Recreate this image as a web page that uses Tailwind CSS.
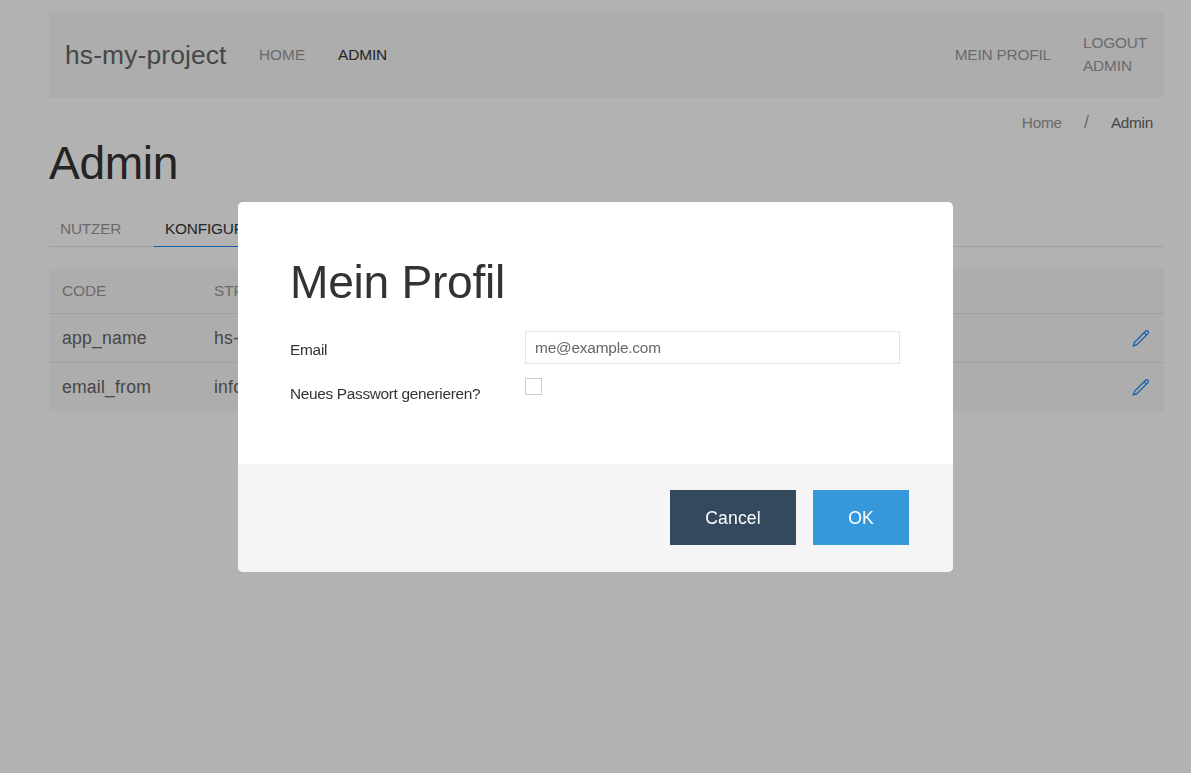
<!DOCTYPE html>
<html lang="de">
<head>
<meta charset="utf-8">
<title>hs-my-project</title>
<script src="https://cdn.jsdelivr.net/npm/@tailwindcss/browser@4"></script>
</head>
<body class="h-[773px] overflow-hidden bg-white font-['Liberation_Sans',Arial,sans-serif] text-[17.6px] leading-[1.5] text-[#666]">
<svg class="hidden"><symbol id="pencil" viewBox="0 0 20 20"><path fill="none" stroke="currentColor" stroke-width="1.15" d="M17.25,6.01 L7.12,16.1 L3.82,17.2 L5.02,13.9 L15.12,3.88 C15.71,3.29 16.66,3.29 17.25,3.88 C17.83,4.47 17.83,5.42 17.25,6.01 L17.25,6.01 Z"/><path fill="none" stroke="currentColor" stroke-width="1.15" d="M15.98,7.268 L13.851,5.148"/></symbol></svg>
<div class="ml-[49px] w-[1115px] pt-[11px]">
  <nav class="flex h-[87px] items-center justify-between bg-[#f8f8f8] px-4 text-[15.4px] leading-[23px] text-[#999]">
    <div class="flex items-center">
      <a class="mr-[33px] w-[161px] pt-[2px] text-[26.4px] leading-none tracking-[0.13px] whitespace-nowrap text-[#666]">hs-my-project</a>
      <a class="mr-[33px] w-[46px]">HOME</a>
      <a class="tracking-[-0.1px] text-[#333]">ADMIN</a>
    </div>
    <div class="flex items-center gap-8">
      <a class="tracking-[-0.19px] whitespace-nowrap">MEIN PROFIL</a>
      <a class="w-[65px] pb-[2px] tracking-[-0.15px]">LOGOUT ADMIN</a>
    </div>
  </nav>
  <div class="flex h-[50px] items-center justify-end pr-[11px] text-[15.4px] text-[#999]">
    <a class="tracking-[-0.2px]">Home</a><span class="mx-[22px] pb-px text-[17.6px]">/</span><span class="tracking-[-0.3px] text-[#666]">Admin</span>
  </div>
  <h1 class="-mt-[12px] h-[55px] text-[46.2px] leading-[55px] tracking-[-0.4px] text-[#333]">Admin</h1>
  <div class="mt-[21px] flex h-[35px] border-b border-[#e5e5e5] text-[15.4px] leading-[23px] tracking-[-0.2px] text-[#999]">
    <a class="mr-[22px] h-[35px] w-[83px] px-[11px] pt-[5px]">NUTZER</a>
    <a class="h-[35px] border-b border-[#1e87f0] px-[11px] pt-[5px] text-[#333]">KONFIGURATION</a>
  </div>
  <div class="mt-[22px] bg-[#f8f8f8]">
    <div class="flex h-[44px] items-center px-[13px] text-[15.4px] tracking-[-0.1px] text-[#999]"><span class="w-[152px]">CODE</span><span>STRING</span></div>
    <div class="flex h-[49px] items-center border-t border-[#e5e5e5] px-[13px] tracking-[0.2px]"><span class="w-[152px]">app_name</span><span>hs-my-project</span><svg class="ml-auto size-[22px] text-[#1e87f0]"><use href="#pencil"/></svg></div>
    <div class="flex h-[49px] items-center border-t border-[#e5e5e5] px-[13px] tracking-[0.2px]"><span class="w-[152px]">email_from</span><span>info@example.com</span><svg class="ml-auto size-[22px] text-[#1e87f0]"><use href="#pencil"/></svg></div>
  </div>
</div>
<div class="fixed inset-0 flex items-start justify-center bg-black/30 pt-[202px]">
  <div class="h-[370px] w-[715px] overflow-hidden rounded-[5px] bg-white">
    <div class="h-[262px] px-[52px] pt-[53px] pr-[53px]">
      <h2 class="h-[55px] text-[46.2px] leading-[55px] tracking-[-0.3px] text-[#333]">Mein Profil</h2>
      <div class="mt-[21px] flex h-[47px] text-[15.4px] text-[#333]">
        <label class="h-[33px] w-[235px] pt-[7px] tracking-[-0.25px]">Email</label>
        <div class="flex h-[33px] flex-1 items-center border border-[#e5e5e5] px-[9px] tracking-[-0.19px] text-[#666]">me@example.com</div>
      </div>
      <div class="flex text-[15.4px] text-[#333]">
        <label class="w-[235px] pt-[4px] tracking-[-0.32px]">Neues Passwort generieren?</label>
        <div class="size-[17px] border border-[#ccc]"></div>
      </div>
    </div>
    <div class="flex h-[108px] justify-end gap-[17px] bg-[#f5f5f5] pt-[26px] pr-[44px] text-white">
      <button class="h-[55px] w-[126px] bg-[#34495e] pt-[2px] tracking-[0.15px]">Cancel</button>
      <button class="h-[55px] w-[96px] bg-[#3498db] pt-[2px]">OK</button>
    </div>
  </div>
</div>
</body>
</html>
